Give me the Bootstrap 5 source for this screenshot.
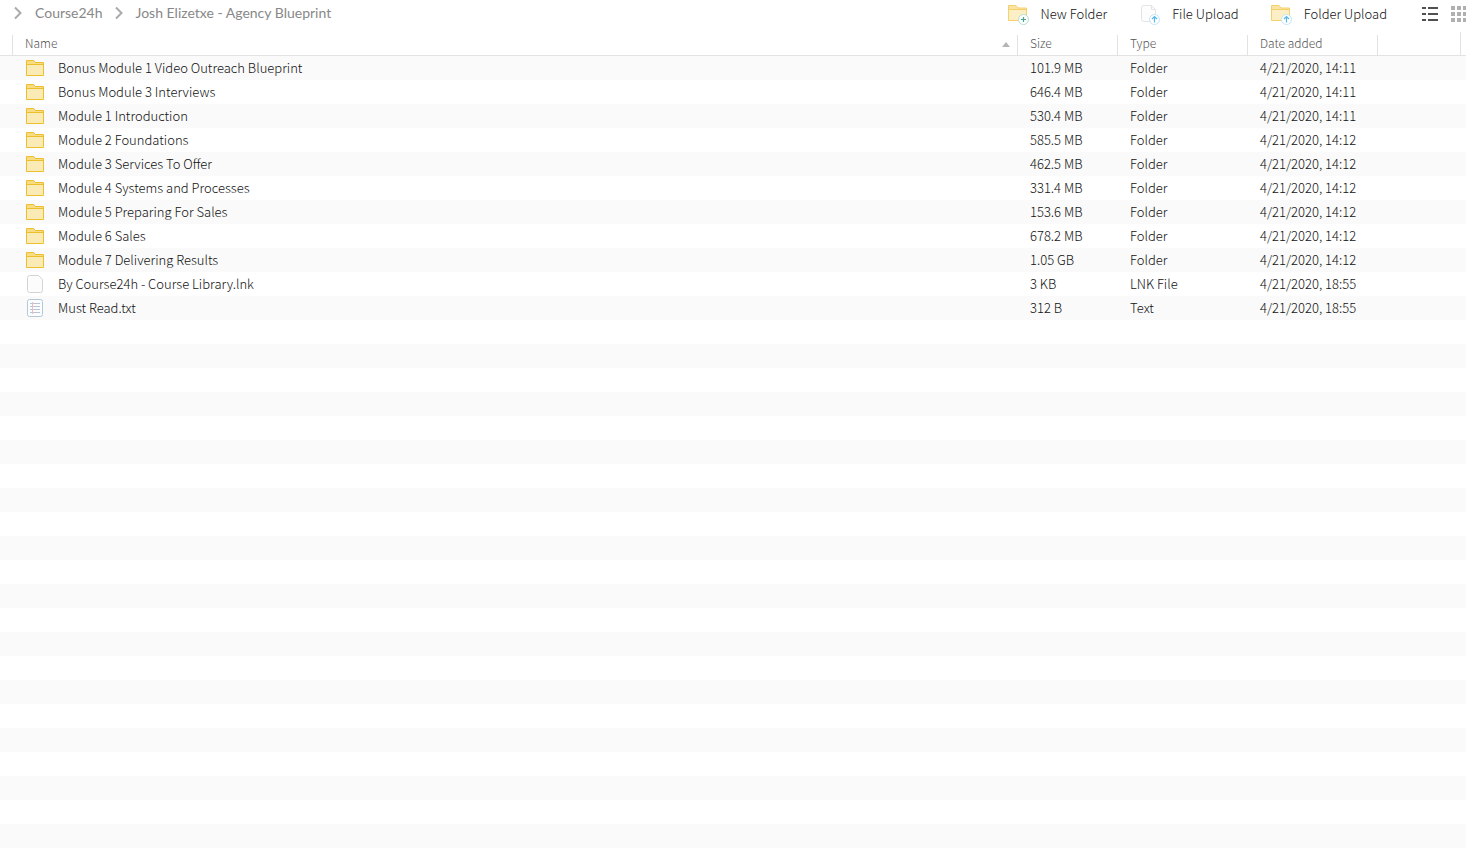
<!DOCTYPE html>
<html lang="en">
<head>
<meta charset="utf-8">
<meta name="viewport" content="width=device-width, initial-scale=1">
<title>Josh Elizetxe - Agency Blueprint</title>
<link rel="stylesheet" href="https://cdn.jsdelivr.net/npm/bootstrap@5.3.0/dist/css/bootstrap.min.css">
<style>
body{font-family:"Noto Sans CJK JP",sans-serif;font-size:13px;line-height:24px;font-weight:300;color:#111;background:#fff}
.toolbar{height:35px}
.crumbs{font-family:Lato,sans-serif;font-size:14px;font-weight:400;color:#888;padding:0 0 10px 14px}
.crumbs ol{gap:12px}
.crumbs li{gap:13px}
.crumbs a{color:inherit}
.tool{font-size:13px;line-height:24px;font-weight:300;color:#111;gap:11px}
.tool:hover{color:#000}
.actions{gap:32px;margin-right:35px;padding-bottom:8px}
.views{gap:13px;padding-bottom:7px}
.files{min-height:calc(100vh - 35px)}
.files table{table-layout:fixed;border-collapse:separate;border-spacing:0}
.files thead th{height:21px;padding:0 12px;font-size:12px;line-height:16px;font-weight:300;color:#555;border-left:1px solid #e2e2e2;border-bottom:1px solid #e2e2e2;vertical-align:top;position:relative}
.files thead th.edge{border-left:0;padding:0}
.files thead th.tail::before{content:"";position:absolute;left:-1px;top:-3px;height:3px;border-left:1px solid #e2e2e2}
.files td{height:24px;padding:0 13px;white-space:nowrap;overflow:hidden}
.entry{gap:13px}
.stripes tr:nth-child(odd){background:#fafafa}
.sort-mark{margin:2px -5px 0 0}
.c-edge{width:12px}.c-size{width:100px}.c-type,.c-date{width:130px}.c-more{width:83px}.c-tail{width:6px}
</style>
</head>
<body class="overflow-hidden">
<svg class="d-none" aria-hidden="true">
 <symbol id="folder" viewBox="0 0 20 20"><path d="M1.5 17.5v-15h7.2l1.6 2h8.2v13z" fill="#faeab6"/><path d="M1.5 6.500v-4h7.2l1.6 2h8.200v2z" fill="#f8dc83"/><path d="M1.500 17.500v-15h7.200l1.600 2h8.200v13zM1.500 6.500h17" fill="none" stroke="#ecc02c"/></symbol>
 <symbol id="file" viewBox="0 0 20 20"><path d="M4.500 1.500h9l4 4V16.500a2 2 0 0 1-2 2h-11a2 2 0 0 1-2-2V3.500a2 2 0 0 1 2-2z" fill="#fcfcfc" stroke="#d4d4d4"/></symbol>
 <symbol id="text" viewBox="0 0 20 20"><rect x="2.500" y="1.500" width="15" height="17" rx="2" fill="#fbfcfe" stroke="#b5c7d9"/><path d="M5 5.500h10M5 8.500h10M5 11.500h10M5 14.500h10" stroke="#b4c5da"/><path d="M7.500 4v12" stroke="#f3b9bb"/></symbol>
 <symbol id="arrow" viewBox="0 0 8 14"><path d="M1 1.500L6.500 7 1 12.500" fill="none" stroke="#aaa" stroke-width="2"/></symbol>
 <symbol id="bigfolder" viewBox="0 0 22 22"><path d="M.5 17.500v-15h7.500l2 2.500h8.500v12.500z" fill="#fcefc6"/><path d="M.5 6.500v-4h7.500l2 2.500h8.500v1.500z" fill="#fae3a4"/><path d="M.5 17.500v-15h7.500l2 2.500h8.500v12.500zM.5 6.500h18" fill="none" stroke="#f5d16c"/></symbol>
 <symbol id="up" viewBox="0 0 22 22"><circle cx="15.500" cy="16.500" r="5" fill="#fff" stroke="#c5e5f4"/><path d="M15.500 19.500v-5.500M13 16l2.500-2.500L18 16" fill="none" stroke="#5ab9e6" stroke-width="1.200"/></symbol>
</svg>

<header class="toolbar d-flex justify-content-between align-items-center">
 <nav class="crumbs" aria-label="Breadcrumb">
  <ol class="list-unstyled d-flex mb-0">
   <li class="d-flex align-items-center"><svg width="8" height="14"><use href="#arrow"/></svg><a class="text-decoration-none" href="#">Course24h</a></li>
   <li class="d-flex align-items-center"><svg width="8" height="14"><use href="#arrow"/></svg><a class="text-decoration-none" href="#" aria-current="page">Josh Elizetxe - Agency Blueprint</a></li>
  </ol>
 </nav>
 <div class="d-flex align-items-center">
  <div class="actions d-flex">
   <button type="button" class="tool btn border-0 p-0 d-flex align-items-center"><svg width="22" height="22"><use href="#bigfolder"/><circle cx="15.500" cy="16.500" r="5" fill="#fff" stroke="#b9dcd2"/><path d="M13 16.500h5M15.500 14v5" stroke="#44a68b" stroke-width="1.200"/></svg>New Folder</button>
   <button type="button" class="tool btn border-0 p-0 d-flex align-items-center"><svg width="22" height="22"><path d="M4.500 2.500h8l4 4v12h-12a2 2 0 0 1-2-2v-12a2 2 0 0 1 2-2z" fill="#fdfdfd" stroke="#e4e4e4"/><path d="M12.500 2.500v4h4" fill="none" stroke="#e4e4e4"/><use href="#up"/></svg>File Upload</button>
   <button type="button" class="tool btn border-0 p-0 d-flex align-items-center"><svg width="22" height="22"><use href="#bigfolder"/><use href="#up"/></svg>Folder Upload</button>
  </div>
  <div class="views d-flex">
   <button type="button" class="btn border-0 p-0 d-flex" aria-label="List view"><svg width="16" height="16"><path d="M0 2h4M6 2h10M0 8h4M6 8h10M0 14h4M6 14h10" stroke="#505050" stroke-width="2"/></svg></button>
   <button type="button" class="btn border-0 p-0 d-flex" aria-label="Grid view"><svg width="15" height="16"><path d="M0 2h4M6 2h4M12 2h4M0 8h4M6 8h4M12 8h4M0 14h4M6 14h4M12 14h4" stroke="#b0b0b0" stroke-width="4"/></svg></button>
  </div>
 </div>
</header>

<main class="files">
 <table class="w-100">
  <colgroup><col class="c-edge"><col><col class="c-size"><col class="c-type"><col class="c-date"><col class="c-more"><col class="c-tail"></colgroup>
  <thead><tr>
   <th class="edge"></th>
   <th scope="col" aria-sort="ascending"><div class="d-flex justify-content-between align-items-center">Name<svg class="sort-mark" width="8" height="5"><path d="M0 5l4-5 4 5z" fill="#b5b5b5"/></svg></div></th>
   <th scope="col">Size</th><th scope="col">Type</th><th scope="col">Date added</th><th></th><th class="tail p-0"></th>
  </tr></thead>
  <tbody class="stripes" id="rows"></tbody>
 </table>
</main>
<script src="https://cdn.jsdelivr.net/npm/bootstrap@5.3.0/dist/js/bootstrap.bundle.min.js"></script>
<script>
const files = [
 ["folder","Bonus Module 1 Video Outreach Blueprint","101.9 MB","Folder","4/21/2020, 14:11"],
 ["folder","Bonus Module 3 Interviews","646.4 MB","Folder","4/21/2020, 14:11"],
 ["folder","Module 1 Introduction","530.4 MB","Folder","4/21/2020, 14:11"],
 ["folder","Module 2 Foundations","585.5 MB","Folder","4/21/2020, 14:12"],
 ["folder","Module 3 Services To Offer","462.5 MB","Folder","4/21/2020, 14:12"],
 ["folder","Module 4 Systems and Processes","331.4 MB","Folder","4/21/2020, 14:12"],
 ["folder","Module 5 Preparing For Sales","153.6 MB","Folder","4/21/2020, 14:12"],
 ["folder","Module 6 Sales","678.2 MB","Folder","4/21/2020, 14:12"],
 ["folder","Module 7 Delivering Results","1.05 GB","Folder","4/21/2020, 14:12"],
 ["file","By Course24h - Course Library.lnk","3 KB","LNK File","4/21/2020, 18:55"],
 ["text","Must Read.txt","312 B","Text","4/21/2020, 18:55"]
];
const rows = files.map(([icon,name,...rest]) =>
 `<tr><td class="p-0"></td><td><div class="entry d-flex align-items-center"><svg width="20" height="20"><use href="#${icon}"/></svg>${name}</div></td>${rest.map(v=>`<td>${v}</td>`).join("")}<td></td><td class="p-0"></td></tr>`);
// empty rows carry the stripes on down the window
const total = Math.floor((innerHeight - 56) / 24);
while (rows.length < total) rows.push('<tr><td colspan="7"></td></tr>');
document.getElementById("rows").innerHTML = rows.join("");
</script>
</body>
</html>
